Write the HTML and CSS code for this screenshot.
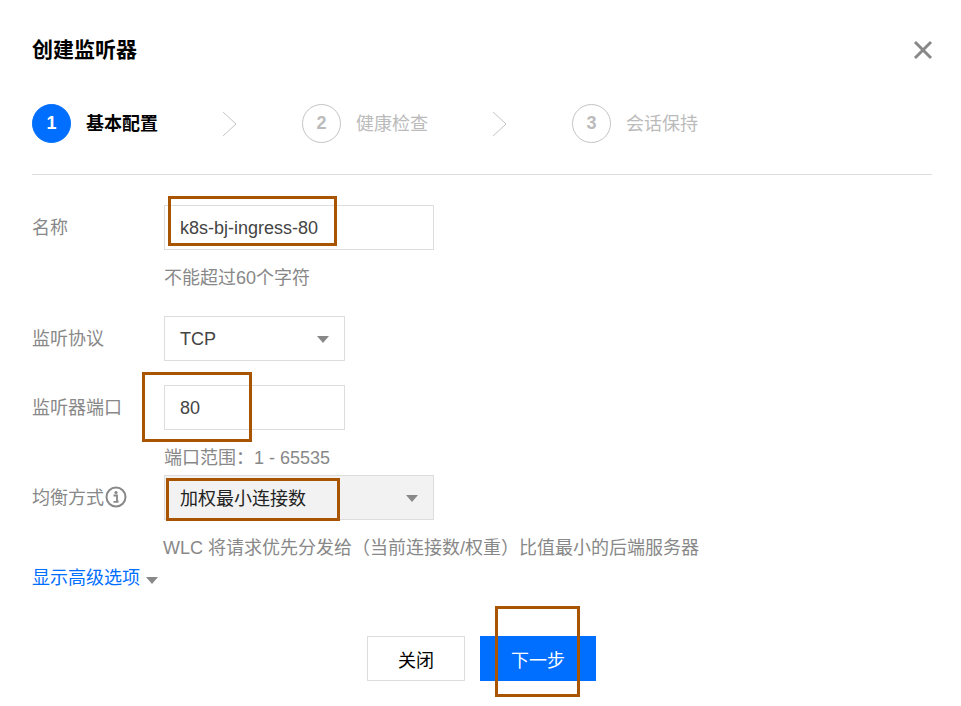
FILE: index.html
```html
<!DOCTYPE html>
<html lang="zh-CN">
<head>
<meta charset="utf-8">
<title>创建监听器</title>
<link rel="stylesheet" href="styles.css">
</head>
<body>
<div class="dialog">
  <header class="head">
    <h1 class="title">创建监听器</h1>
    <svg class="close" width="20" height="20" viewBox="0 0 20 20"><path d="M2 2 L18 18 M18 2 L2 18" stroke="#888" stroke-width="3" fill="none"/></svg>
  </header>
  <ol class="steps">
    <li class="step active"><span class="num">1</span><span class="step-label">基本配置</span>
      <svg class="chev" width="15" height="26" viewBox="0 0 15 26"><path d="M1 1 L14 13 L1 25" stroke="#c4c4c4" stroke-width="1" fill="none"/></svg></li>
    <li class="step"><span class="num">2</span><span class="step-label">健康检查</span>
      <svg class="chev" width="15" height="26" viewBox="0 0 15 26"><path d="M1 1 L14 13 L1 25" stroke="#c4c4c4" stroke-width="1" fill="none"/></svg></li>
    <li class="step"><span class="num">3</span><span class="step-label">会话保持</span></li>
  </ol>
  <form class="form">
    <div class="row row-name">
      <label class="label">名称</label>
      <div class="field"><div class="control wide">k8s-bj-ingress-80</div><p class="hint hint-name">不能超过60个字符</p></div>
    </div>
    <div class="row row-proto">
      <label class="label">监听协议</label>
      <div class="field"><div class="control narrow select">TCP<i class="caret"></i></div></div>
    </div>
    <div class="row row-port">
      <label class="label">监听器端口</label>
      <div class="field"><div class="control narrow">80</div><p class="hint hint-port">端口范围：1 - 65535</p></div>
    </div>
    <div class="row row-algo">
      <label class="label">均衡方式<svg class="info" width="22" height="22" viewBox="0 0 22 22"><circle cx="11" cy="11" r="9.5" stroke="#888" stroke-width="2" fill="none"/><circle cx="11" cy="6.5" r="1.6" fill="#888"/><path d="M8.5 9.5 H12 V15.5 H13.5 M8.5 15.8 H13.5" stroke="#888" stroke-width="1.8" fill="none"/></svg></label>
      <div class="field"><div class="control wide select disabled">加权最小连接数<i class="caret"></i></div><p class="hint hint-algo">WLC 将请求优先分发给（当前连接数/权重）比值最小的后端服务器</p></div>
    </div>
    <a class="more">显示高级选项<i class="caret small"></i></a>
    <div class="actions">
      <button type="button" class="btn">关闭</button>
      <button type="button" class="btn primary">下一步</button>
    </div>
  </form>
  <div class="watermark" aria-hidden="true">
    <div class="wm-row">yangwenwb_yangwenwb_yangwenwb_yangwenwb_yangwenwb_yangwenwb_</div>
    <div class="wm-row">yangwenwb_yangwenwb_yangwenwb_yangwenwb_yangwenwb_yangwenwb_</div>
    <div class="wm-row">yangwenwb_yangwenwb_yangwenwb_yangwenwb_yangwenwb_yangwenwb_</div>
    <div class="wm-row">yangwenwb_yangwenwb_yangwenwb_yangwenwb_yangwenwb_yangwenwb_</div>
    <div class="wm-row">yangwenwb_yangwenwb_yangwenwb_yangwenwb_yangwenwb_yangwenwb_</div>
    <div class="wm-row">yangwenwb_yangwenwb_yangwenwb_yangwenwb_yangwenwb_yangwenwb_</div>
    <div class="wm-row">yangwenwb_yangwenwb_yangwenwb_yangwenwb_yangwenwb_yangwenwb_</div>
    <div class="wm-row">yangwenwb_yangwenwb_yangwenwb_yangwenwb_yangwenwb_yangwenwb_</div>
  </div>
  <div class="mark mark-name"></div>
  <div class="mark mark-port"></div>
  <div class="mark mark-algo"></div>
  <div class="mark mark-next"></div>
</div>
</body>
</html>
```
FILE: styles.css
```css
* { box-sizing: border-box; }
html, body { margin: 0; padding: 0; background: #fff; }
body { font-family: "Liberation Sans", "Noto Sans CJK SC", sans-serif; font-size: 18px; color: #444; overflow: hidden; }
.dialog { position: relative; width: 961px; height: 706px; padding: 0 29px 0 32px; overflow: hidden; }
.head { display: flex; justify-content: space-between; align-items: center; height: 100px; margin-bottom: 4px; }
.title { margin: 0; font-size: 21px; line-height: 30px; font-weight: 700; color: #000; }
.close { display: block; margin-right: -1px; }
.steps { list-style: none; display: flex; margin: 0; padding: 0 0 31px; border-bottom: 1px solid #ddd; height: 71px; }
.step { display: flex; align-items: center; width: 270px; height: 39px; color: #bbb; }
.num { flex: none; width: 39px; height: 39px; border-radius: 50%; border: 1px solid #c4c4c4; display: flex; align-items: center; justify-content: center; font-weight: 700; color: #bbb; margin-right: 15px; }
.step-label { width: 72px; white-space: nowrap; padding-bottom: 4px; }
.chev { margin-left: 64px; }
.active .num { background: #006eff; border-color: #006eff; color: #fff; }
.active .step-label { color: #000; font-weight: 700; }
.form { display: flex; flex-direction: column; padding-top: 30px; }
.row { display: flex; }
.label { width: 132px; flex: none; color: #888; display: flex; align-items: center; height: 44px; padding-bottom: 2px; white-space: nowrap; }
.field { flex: 1; }
.control { position: relative; height: 45px; line-height: 44px; padding-left: 15px; border: 1px solid #ddd; background: #fff; color: #444; }
.wide { width: 270px; }
.narrow { width: 181px; }
.disabled { background: #f2f2f2; color: #222; line-height: 46px; }
.caret { position: absolute; right: 15px; top: 19px; width: 0; height: 0; border-left: 6px solid transparent; border-right: 6px solid transparent; border-top: 7px solid #888; }
.hint { margin: 0 0 0 -1px; color: #888; line-height: 26px; white-space: nowrap; }
.hint-name { margin: 15px 0 0; }
.hint-port { margin: 15px 0 0; height: 18px; }
.hint-algo { margin-top: 15px; height: 26px; }
.row-proto { margin-top: 25px; }
.row-port { margin-top: 24px; }
.row-algo { margin-top: 12px; }
.info { margin: 2px 0 0 1px; }
.more { display: flex; align-items: center; color: #006eff; line-height: 24px; margin-top: 5px; }
.caret.small { position: static; margin-left: 6px; margin-top: 4px; }
.actions { display: flex; justify-content: center; gap: 15px; margin-top: 46px; margin-right: 1px; }
.btn { height: 45px; width: 98px; border: 1px solid #ddd; background: #fff; color: #000; font: inherit; padding: 0; }
.primary { width: 116px; background: #006eff; border-color: #006eff; color: #fff; }
.watermark { position: absolute; left: -42px; top: -35px; pointer-events: none; display: flex; flex-direction: column; }
.wm-row { height: 90px; line-height: 90px; font-size: 31px; white-space: nowrap; color: rgba(0, 0, 0, 0.015); }
.mark { position: absolute; border: 3px solid #a85400; }
.mark-name { left: 168px; top: 196px; width: 169px; height: 50px; }
.mark-port { left: 142px; top: 372px; width: 110px; height: 70px; }
.mark-algo { left: 166px; top: 478px; width: 174px; height: 43px; }
.mark-next { left: 495px; top: 606px; width: 85px; height: 91px; }
```
